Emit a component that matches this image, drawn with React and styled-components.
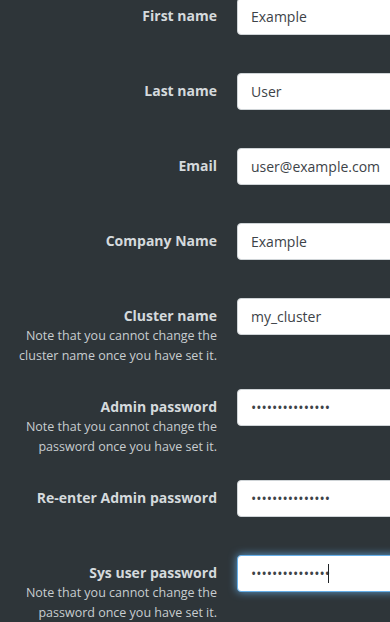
import React from "react";
import styled, { createGlobalStyle } from "styled-components";

const Global = createGlobalStyle`
  html, body { margin: 0; padding: 0; background: #2e3539; overflow: hidden; }
  body { font-family: "Open Sans", "Noto Sans", sans-serif; }
`;

const Form = styled.form`
  width: 440px;
  margin-top: -2px;
  display: flex;
  flex-direction: column;
  gap: 24px;
`;

const Row = styled.div`
  display: grid;
  grid-template-columns: 217px 1fr;
  column-gap: 20px;
  min-height: 51px;
`;

const LabelCol = styled.div`
  display: flex;
  flex-direction: column;
  align-items: flex-end;
  text-align: right;
  padding-top: 7px;
`;

const Label = styled.label`
  font-size: 14px;
  font-weight: 700;
  line-height: 21px;
  color: #d5dadd;
`;

const Note = styled.div`
  font-size: 12.5px;
  line-height: 19.5px;
  color: #c8cdd0;
  width: 200px;
`;

const Field = styled.div`
  position: relative;
  height: 37px;
`;

const Input = styled.input`
  box-sizing: border-box;
  height: 37px;
  width: 100%;
  padding: 0 13px;
  border: 1px solid ${(p) => (p.$focused ? "#66afe9" : "#cfd4d7")};
  border-radius: 4px;
  background: #fff;
  font-family: "Open Sans", "Noto Sans", sans-serif;
  font-size: 14px;
  color: #3d4348;
  outline: none;
  box-shadow: ${(p) =>
    p.$focused ? "0 0 8px rgba(102, 175, 233, 0.85)" : "none"};
`;

const Caret = styled.span`
  position: absolute;
  left: ${(p) => p.$left}px;
  top: 9px;
  width: 1px;
  height: 19px;
  background: #1f2326;
  pointer-events: none;
`;

const fields = [
  { label: "First name", value: "Example" },
  { label: "Last name", value: "User" },
  { label: "Email", value: "user@example.com" },
  { label: "Company Name", value: "Example" },
  {
    label: "Cluster name",
    value: "my_cluster",
    note: "Note that you cannot change the cluster name once you have set it.",
  },
  {
    label: "Admin password",
    value: "aaaaaaaaaaaaaaa",
    type: "password",
    note: "Note that you cannot change the password once you have set it.",
  },
  { label: "Re-enter Admin password", value: "aaaaaaaaaaaaaaa", type: "password" },
  {
    label: "Sys user password",
    value: "aaaaaaaaaaaaaaa",
    type: "password",
    focused: true,
    note: "Note that you cannot change the password once you have set it.",
  },
];

export default function App() {
  return (
    <>
      <Global />
      <Form onSubmit={(e) => e.preventDefault()}>
        {fields.map((f, i) => (
          <Row key={i}>
            <LabelCol>
              <Label htmlFor={`f${i}`}>{f.label}</Label>
              {f.note && <Note>{f.note}</Note>}
            </LabelCol>
            <Field>
              <Input
                id={`f${i}`}
                type={f.type || "text"}
                defaultValue={f.value}
                $focused={f.focused}
                readOnly
              />
              {f.focused && <Caret $left={91} />}
            </Field>
          </Row>
        ))}
      </Form>
    </>
  );
}
